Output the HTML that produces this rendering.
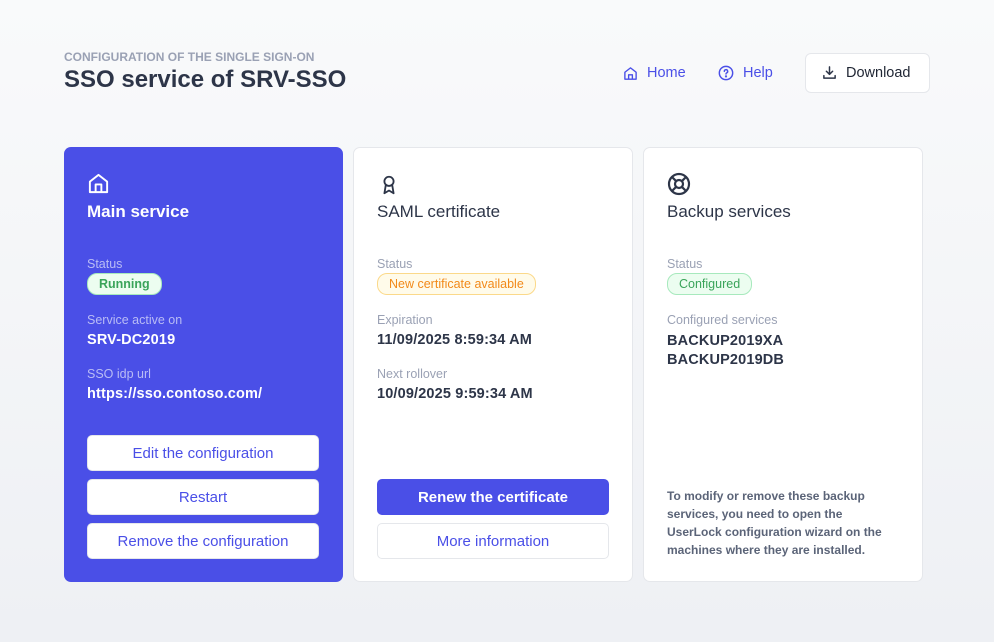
<!DOCTYPE html>
<html><head><meta charset="utf-8"><style>
*{margin:0;padding:0;box-sizing:border-box}
body{width:994px;height:642px;overflow:hidden;font-family:"Liberation Sans",sans-serif;background:linear-gradient(180deg,#f9fafb 0%,#eef0f4 100%);position:relative;color:#2d3548}
.a{position:absolute;white-space:nowrap}
.card{position:absolute;top:147px;height:435px;width:280px;border-radius:7px;background:#fff;border:1px solid #e5e7eb}
.blue{background:#4a4fe7;border:none}
.lbl{font-size:12.5px;color:#9aa1b4}
.blue .lbl{color:#b9bcf5}
.val{font-size:14.5px;font-weight:bold;color:#2d3548;letter-spacing:0.15px}
.blue .val{color:#fff}
.h{font-size:17px;color:#2d3548}
.blue .h{color:#fff;font-weight:bold}
.pill{font-size:12.5px;border-radius:10px;padding:3px 11px;border:1px solid}
.btn{position:absolute;left:23px;width:232px;height:36px;border-radius:5px;background:#fff;color:#4a4fe7;font-size:15px;text-align:center;line-height:36px;border:1px solid #e5e7eb}
</style></head><body>
<div class="a" style="left:64px;top:50px;font-size:12px;font-weight:bold;color:#9aa1b4">CONFIGURATION OF THE SINGLE SIGN-ON</div>
<div class="a" style="left:64px;top:66px;font-size:24px;font-weight:bold;color:#2d3548">SSO service of SRV-SSO</div>
<svg class="a" style="left:623px;top:66px" width="15" height="15" viewBox="0 0 24 24" fill="none" stroke="#4a4fe7" stroke-width="2.2" stroke-linejoin="round"><path d="M3 10L12 3l9 7v11H3z M9 21v-7h6v7"/></svg>
<div class="a" style="left:647px;top:65px;font-size:14.5px;color:#4a4fe7">Home</div>
<svg class="a" style="left:718px;top:65px" width="16" height="16" viewBox="0 0 24 24" fill="none" stroke="#4a4fe7" stroke-width="2.2" stroke-linecap="round"><circle cx="12" cy="12" r="10"/><path d="M9.5 9.5a2.5 2.5 0 1 1 3.5 2.3c-.7.3-1 .9-1 1.7"/><circle cx="12" cy="17" r=".6" fill="#4a4fe7"/></svg>
<div class="a" style="left:743px;top:65px;font-size:14.5px;color:#4a4fe7">Help</div>
<div class="a" style="left:805px;top:53px;width:125px;height:40px;background:#fff;border:1px solid #e5e7eb;border-radius:6px"></div>
<svg class="a" style="left:822px;top:65px" width="15" height="15" viewBox="0 0 24 24" fill="none" stroke="#2d3548" stroke-width="2.4" stroke-linecap="round" stroke-linejoin="round"><path d="M12 3v12M7 10l5 5 5-5M3 17v4h18v-4"/></svg>
<div class="a" style="left:846px;top:65px;font-size:14.5px;color:#1f2533">Download</div>

<div class="card blue" style="left:64px;width:279px">
<svg class="a" style="left:23px;top:25px" width="23" height="23" viewBox="0 0 24 24" fill="none" stroke="#fff" stroke-width="2" stroke-linejoin="round"><path d="M3 10L12 3l9 7v11H3z M9 21v-8h6v8"/></svg>
<div class="a h" style="left:23px;top:55px">Main service</div>
<div class="a lbl" style="left:23px;top:110px">Status</div>
<div class="a pill" style="left:23px;top:126px;background:#ecfdf0;border-color:#a7e9bd;color:#3aa45a;font-weight:bold">Running</div>
<div class="a lbl" style="left:23px;top:166px">Service active on</div>
<div class="a val" style="left:23px;top:185px">SRV-DC2019</div>
<div class="a lbl" style="left:23px;top:220px">SSO idp url</div>
<div class="a val" style="left:23px;top:239px">https://sso.contoso.com/</div>
<div class="btn" style="top:288px">Edit the configuration</div>
<div class="btn" style="top:332px">Restart</div>
<div class="btn" style="top:376px">Remove the configuration</div>
</div>

<div class="card" style="left:353px">
<svg class="a" style="left:24px;top:25px" width="22" height="24" viewBox="0 0 24 24" fill="none" stroke="#2d3548" stroke-width="2" stroke-linejoin="round"><circle cx="12" cy="8" r="5"/><path d="M8.5 12L7 21l5-3 5 3-1.5-9"/></svg>
<div class="a h" style="left:23px;top:54px">SAML certificate</div>
<div class="a lbl" style="left:23px;top:109px">Status</div>
<div class="a pill" style="left:23px;top:125px;background:#fffbea;border-color:#fbd98a;color:#f28a1a">New certificate available</div>
<div class="a lbl" style="left:23px;top:165px">Expiration</div>
<div class="a val" style="left:23px;top:184px">11/09/2025 8:59:34 AM</div>
<div class="a lbl" style="left:23px;top:219px">Next rollover</div>
<div class="a val" style="left:23px;top:238px">10/09/2025 9:59:34 AM</div>
<div class="btn" style="top:331px;background:#4a4fe7;color:#fff;border-color:#4a4fe7;font-weight:bold">Renew the certificate</div>
<div class="btn" style="top:375px">More information</div>
</div>

<div class="card" style="left:643px">
<svg class="a" style="left:23px;top:24px" width="24" height="24" viewBox="0 0 24 24" fill="none" stroke="#2d3548" stroke-width="2.2"><circle cx="12" cy="12" r="10"/><circle cx="12" cy="12" r="4"/><path d="M5 5l4.2 4.2M19 5l-4.2 4.2M5 19l4.2-4.2M19 19l-4.2-4.2"/></svg>
<div class="a h" style="left:23px;top:54px">Backup services</div>
<div class="a lbl" style="left:23px;top:109px">Status</div>
<div class="a pill" style="left:23px;top:125px;background:#ecfdf0;border-color:#a7e9bd;color:#3aa45a">Configured</div>
<div class="a lbl" style="left:23px;top:165px">Configured services</div>
<div class="a val" style="left:23px;top:184px;line-height:19px">BACKUP2019XA<br>BACKUP2019DB</div>
<div class="a" style="left:23px;top:339px;font-size:12px;line-height:18px;color:#5b6478;font-weight:bold;white-space:normal;width:222px">To modify or remove these backup services, you need to open the UserLock configuration wizard on the machines where they are installed.</div>
</div>
</body></html>
